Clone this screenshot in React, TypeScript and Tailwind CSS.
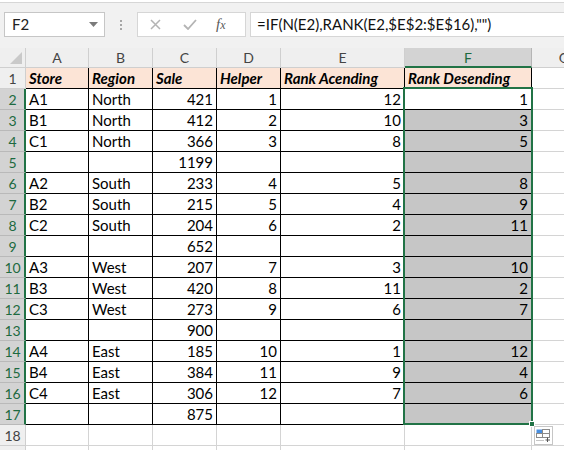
const cols = [
  { key: 'A', w: 'w-[63px]' },
  { key: 'B', w: 'w-[64px]' },
  { key: 'C', w: 'w-[64px]' },
  { key: 'D', w: 'w-[64px]' },
  { key: 'E', w: 'w-[124px]' },
  { key: 'F', w: 'w-[127px]' },
];

type Row = [string, string, string, string, string, string];

const rows: Row[] = [
  ['A1', 'North', '421', '1', '12', '1'],
  ['B1', 'North', '412', '2', '10', '3'],
  ['C1', 'North', '366', '3', '8', '5'],
  ['', '', '1199', '', '', ''],
  ['A2', 'South', '233', '4', '5', '8'],
  ['B2', 'South', '215', '5', '4', '9'],
  ['C2', 'South', '204', '6', '2', '11'],
  ['', '', '652', '', '', ''],
  ['A3', 'West', '207', '7', '3', '10'],
  ['B3', 'West', '420', '8', '11', '2'],
  ['C3', 'West', '273', '9', '6', '7'],
  ['', '', '900', '', '', ''],
  ['A4', 'East', '185', '10', '1', '12'],
  ['B4', 'East', '384', '11', '9', '4'],
  ['C4', 'East', '306', '12', '7', '6'],
  ['', '', '875', '', '', ''],
];

const headers = ['Store', 'Region', 'Sale', 'Helper', 'Rank Acending', 'Rank Desending'];

const font = { fontFamily: 'Lato, "Liberation Sans", sans-serif' };

const FormulaBar = () => (
  <div className="h-[48px] bg-white pt-[2px]">
    <div className="flex h-[46px] items-start border-t border-[#d6d6d6] bg-[#f1f1f1] pt-[9px]">
      {/* Name box */}
      <div className="ml-[4px] flex h-[25px] w-[101px] items-center justify-between border border-[#c6c6c6] bg-white pl-[7px] pr-[6px] text-[15px] text-[#222]">
        <span>F2</span>
        <svg width="9" height="5" viewBox="0 0 9 5">
          <path d="M0 0 H9 L4.5 5 Z" fill="#7b7b7b" />
        </svg>
      </div>
      {/* Dots */}
      <div className="flex h-[25px] w-[32px] flex-col items-center justify-center gap-[2px]">
        <span className="h-[2px] w-[2px] bg-[#a6a6a6]" />
        <span className="h-[2px] w-[2px] bg-[#a6a6a6]" />
        <span className="h-[2px] w-[2px] bg-[#a6a6a6]" />
      </div>
      {/* Cancel / enter / fx */}
      <div className="flex h-[25px] w-[109px] items-center border border-[#d6d6d6] bg-white">
        <svg className="ml-[12px]" width="11" height="11" viewBox="0 0 11 11">
          <path d="M1 1 L10 10 M10 1 L1 10" stroke="#b4b4b4" strokeWidth="1.5" />
        </svg>
        <svg className="ml-[22px]" width="14" height="11" viewBox="0 0 14 11">
          <path d="M1 6 L5 10 L13 1" stroke="#b4b4b4" strokeWidth="1.8" fill="none" />
        </svg>
        <span
          className="ml-[19px] text-[15px] italic text-[#5a5a5a]"
          style={{ fontFamily: '"Liberation Serif", serif' }}
        >
          f<span className="text-[12px]">x</span>
        </span>
      </div>
      {/* Formula input */}
      <div className="ml-[4px] flex h-[25px] flex-1 items-center border-y border-l border-[#d6d6d6] bg-white pl-[6px] text-[15px] text-[#111]">
        =IF(N(E2),RANK(E2,$E$2:$E$16),"")
      </div>
    </div>
  </div>
);

const ColumnHeaders = () => (
  <div className="flex h-[20px] bg-[#efefef] text-[14px] text-[#444]">
    <div className="relative w-[26px] border-r border-b border-[#cfcfcf]">
      <svg className="absolute right-[3px] bottom-[3px]" width="12" height="12" viewBox="0 0 12 12">
        <path d="M12 0 V12 H0 Z" fill="#c9c9c9" />
      </svg>
    </div>
    {cols.map((c) =>
      c.key === 'F' ? (
        <div
          key={c.key}
          className={`${c.w} flex items-center justify-center border-r border-[#b5b5b5] border-b-2 border-b-[#217346] bg-[#d3d3d3] text-[#1d6a40]`}
        >
          {c.key}
        </div>
      ) : (
        <div
          key={c.key}
          className={`${c.w} flex items-center justify-center border-r border-b border-[#cfcfcf]`}
        >
          {c.key}
        </div>
      ),
    )}
    <div className="flex flex-1 items-center justify-end overflow-hidden border-b border-[#cfcfcf]">
      <span className="-mr-[5px]">G</span>
    </div>
  </div>
);

const RowHeader = ({ n, selected }: { n?: number; selected: boolean }) => (
  <div
    className={
      selected
        ? 'flex w-[26px] items-center justify-center border-r-2 border-b border-r-[#217346] border-b-[#b9b9b9] bg-[#d3d3d3] pl-[1px] text-[14px] text-[#1d6a40]'
        : 'flex w-[26px] items-center justify-center border-r border-b border-[#cfcfcf] bg-[#efefef] text-[14px] text-[#444]'
    }
  >
    {n}
  </div>
);

export default function App() {
  return (
    <div className="relative h-[450px] w-[564px] overflow-hidden bg-white" style={font}>
      <FormulaBar />
      <ColumnHeaders />

      {/* Row 1: table headings */}
      <div className="flex h-[21px]">
        <RowHeader n={1} selected={false} />
        {cols.map((c, i) => (
          <div
            key={c.key}
            className={`${c.w} flex items-end border-r border-b border-black bg-[#fce4d6] pb-[1px] pl-[3px] text-[15px] font-bold italic leading-[18px] text-black`}
          >
            {headers[i]}
          </div>
        ))}
        <div className="flex-1 border-b border-[#d4d4d4]" />
      </div>

      {/* Data rows */}
      {rows.map((r, ri) => (
        <div key={ri} className="flex h-[21px]">
          <RowHeader n={ri + 2} selected />
          {cols.map((c, ci) => {
            const numeric = ci >= 2;
            const fill = ci === 5 && ri > 0 ? 'bg-[#c6c6c6]' : 'bg-white';
            return (
              <div
                key={c.key}
                className={`${c.w} ${fill} flex items-end border-r border-b border-black pb-[1px] text-[15px] leading-[18px] text-black ${
                  numeric ? 'justify-end pr-[3px]' : 'pl-[3px]'
                }`}
              >
                {r[ci]}
              </div>
            );
          })}
          <div className="flex-1 border-b border-[#d4d4d4]" />
        </div>
      ))}

      {/* Row 18 and the top of row 19 */}
      {[18, undefined].map((n, i) => (
        <div key={i} className="flex h-[21px]">
          <RowHeader n={n} selected={false} />
          {cols.map((c) => (
            <div key={c.key} className={`${c.w} border-r border-b border-[#d4d4d4]`} />
          ))}
          <div className="flex-1 border-b border-[#d4d4d4]" />
        </div>
      ))}

      {/* Selection outline F2:F17 */}
      <div className="pointer-events-none absolute top-[87px] left-[403px] h-[338px] w-[130px] border-2 border-[#217346]" />
      <div className="absolute top-[421px] left-[529px] h-[6px] w-[6px] border border-white bg-[#217346]" />

      {/* Quick analysis button */}
      <div className="absolute top-[426px] left-[534px] flex h-[19px] w-[19px] items-center justify-center border border-[#c6c6c6] bg-white">
        <svg width="15" height="13" viewBox="0 0 15 13">
          <rect x="0.5" y="0.5" width="6" height="4" fill="#4a8fe0" />
          <rect x="6.5" y="0.5" width="7" height="4" fill="none" stroke="#8a8a8a" />
          <rect x="0.5" y="4.5" width="6" height="4" fill="none" stroke="#8a8a8a" />
          <rect x="6.5" y="4.5" width="7" height="4" fill="none" stroke="#8a8a8a" />
          <path d="M0.5 11.5 H8" stroke="#8a8a8a" strokeDasharray="1 1" />
          <path d="M11.5 8.5 V13 M9.5 11 H14" stroke="#555" />
        </svg>
      </div>
    </div>
  );
}
